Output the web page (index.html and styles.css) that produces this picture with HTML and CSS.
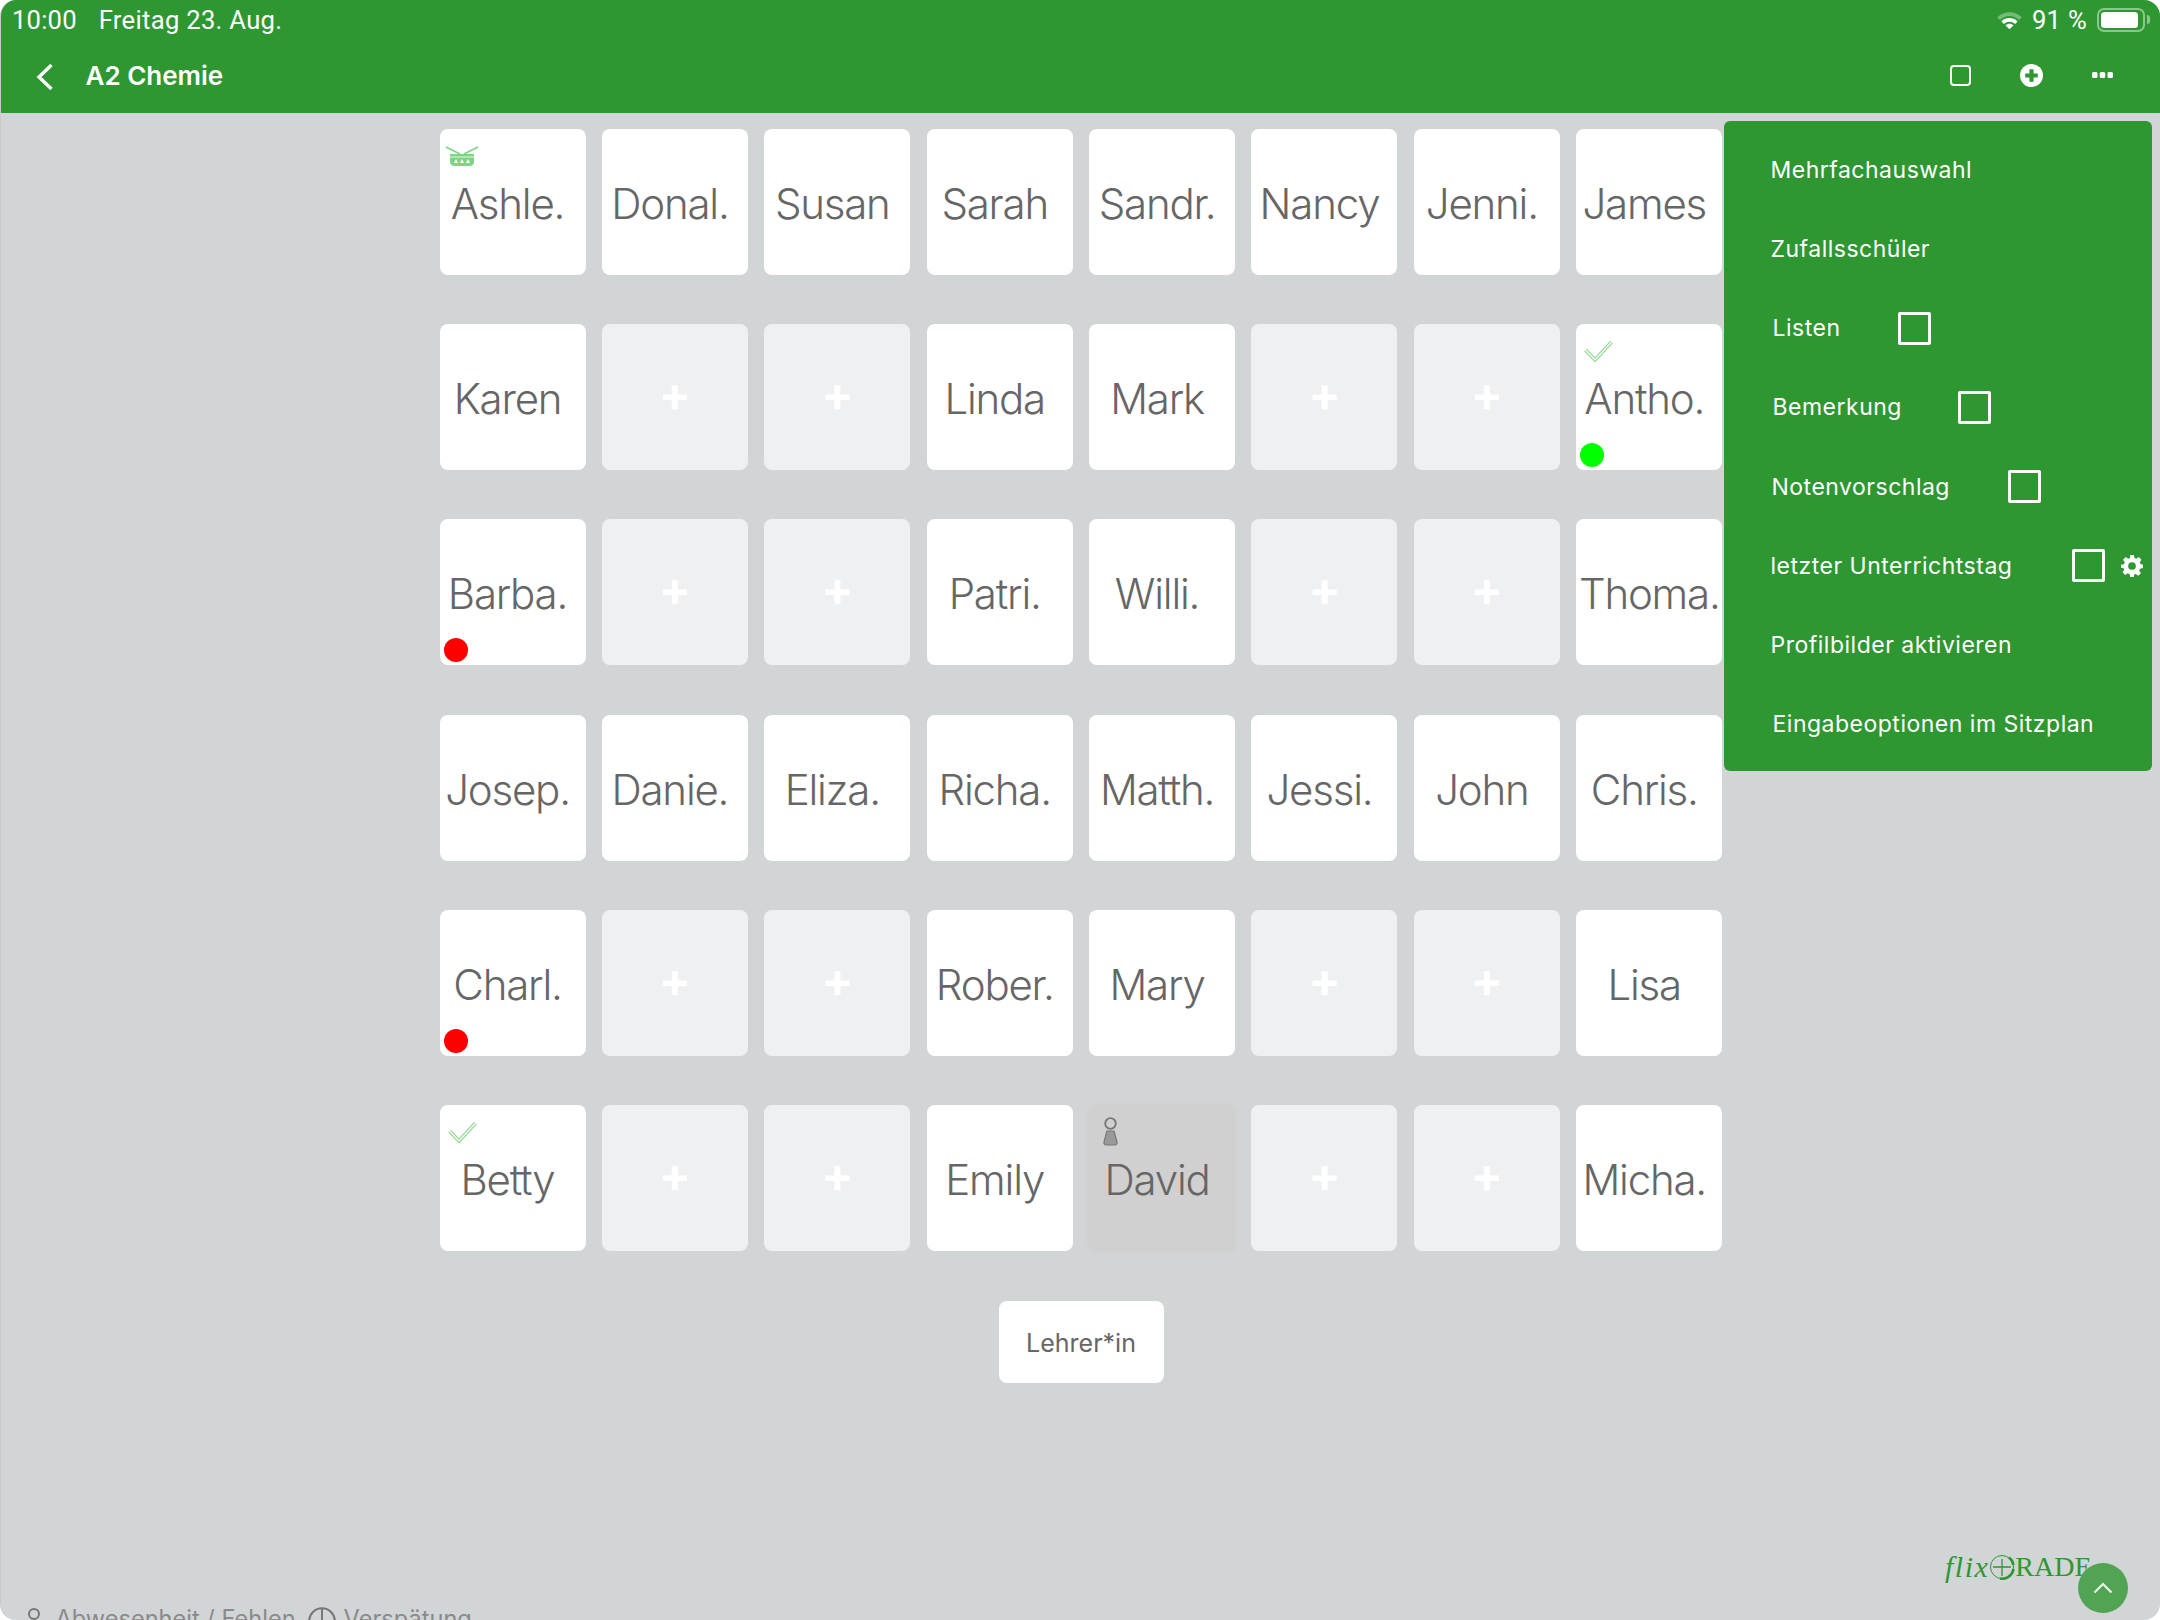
FILE: index.html
```html
<!DOCTYPE html>
<html lang="de">
<head>
<meta charset="utf-8">
<title>A2 Chemie</title>
<link rel="stylesheet" href="styles.css">
</head>
<body>
<div class="app">
  <header class="topbar">
    <div class="status">
      <span class="time">10:00</span>
      <span class="date">Freitag 23. Aug.</span>
      <span class="status-right">
        <svg class="wifi" viewBox="0 0 24 18"><path d="M1 6.500C7.500 .5 16.500 .5 23 6.500L20.600 9C15.500 4.300 8.500 4.300 3.400 9Z" fill="#fff" fill-opacity=".35"/><path d="M4.700 10.300C9 6.300 15 6.300 19.300 10.300L17 12.500C14 9.800 10 9.800 7 12.500Z" fill="#fff"/><path d="M8.300 13.700C10.500 11.800 13.500 11.800 15.700 13.700L12 17.400Z" fill="#fff"/></svg>
        <span class="battery-text">91 %</span>
        <span class="battery"><span class="battery-fill"></span></span>
        <span class="battery-tip"></span>
      </span>
    </div>
    <div class="toolbar">
      <svg class="back" viewBox="0 0 18 28"><path d="M15.500 2L3 14l12.500 12" fill="none" stroke="#fff" stroke-width="3.400"/></svg>
      <span class="title">A2 Chemie</span>
      <span class="tools">
        <span class="tool-square"></span>
        <svg class="tool-plus" viewBox="0 0 22 22"><circle cx="11" cy="11" r="11" fill="#fff"/><path d="M11 5v12M5 11h12" stroke="#2e9732" stroke-width="4"/></svg>
        <svg class="tool-dots" viewBox="0 0 21 6"><rect width="5.500" height="6" rx="1.500" fill="#fff"/><rect x="7.700" width="5.500" height="6" rx="1.500" fill="#fff"/><rect x="15.500" width="5.500" height="6" rx="1.500" fill="#fff"/></svg>
      </span>
    </div>
  </header>

  <main class="content">
    <div class="seats">
      <div class="seat"><svg class="ico-drum" viewBox="0 0 34 20"><path d="M1 1l14 7M33 1L19 8" stroke="#7fd483" stroke-width="1.800" fill="none"/><path d="M5 8h24v8c0 2-2 4-4 4H9c-2 0-4-2-4-4Z" fill="#7fd483"/><path d="M5 11h24" stroke="#fff" stroke-width=".8"/><path d="M9 17l2-4 2 4ZM15 17l2-4 2 4ZM21 17l2-4 2 4Z" fill="#fff"/></svg><span>Ashle.</span></div>
      <div class="seat"><span>Donal.</span></div>
      <div class="seat"><span>Susan</span></div>
      <div class="seat"><span>Sarah</span></div>
      <div class="seat"><span>Sandr.</span></div>
      <div class="seat"><span>Nancy</span></div>
      <div class="seat"><span>Jenni.</span></div>
      <div class="seat"><span>James</span></div>

      <div class="seat"><span>Karen</span></div>
      <div class="seat empty">+</div>
      <div class="seat empty">+</div>
      <div class="seat"><span>Linda</span></div>
      <div class="seat"><span>Mark</span></div>
      <div class="seat empty">+</div>
      <div class="seat empty">+</div>
      <div class="seat"><svg class="ico-check" viewBox="0 0 29 22"><path d="M1.500 10L11 20 27.500 2" fill="none" stroke="#8fd690" stroke-width="3.600"/><path d="M1.500 10L11 20 27.500 2" fill="none" stroke="#fff" stroke-width="1.300"/></svg><span>Antho.</span><i class="dot green"></i></div>

      <div class="seat"><span>Barba.</span><i class="dot red"></i></div>
      <div class="seat empty">+</div>
      <div class="seat empty">+</div>
      <div class="seat"><span>Patri.</span></div>
      <div class="seat"><span>Willi.</span></div>
      <div class="seat empty">+</div>
      <div class="seat empty">+</div>
      <div class="seat wide"><span>Thoma.</span></div>

      <div class="seat"><span>Josep.</span></div>
      <div class="seat"><span>Danie.</span></div>
      <div class="seat"><span>Eliza.</span></div>
      <div class="seat"><span>Richa.</span></div>
      <div class="seat"><span>Matth.</span></div>
      <div class="seat"><span>Jessi.</span></div>
      <div class="seat"><span>John</span></div>
      <div class="seat"><span>Chris.</span></div>

      <div class="seat"><span>Charl.</span><i class="dot red"></i></div>
      <div class="seat empty">+</div>
      <div class="seat empty">+</div>
      <div class="seat"><span>Rober.</span></div>
      <div class="seat"><span>Mary</span></div>
      <div class="seat empty">+</div>
      <div class="seat empty">+</div>
      <div class="seat"><span>Lisa</span></div>

      <div class="seat"><svg class="ico-check" viewBox="0 0 29 22"><path d="M1.500 10L11 20 27.500 2" fill="none" stroke="#8fd690" stroke-width="3.600"/><path d="M1.500 10L11 20 27.500 2" fill="none" stroke="#fff" stroke-width="1.300"/></svg><span>Betty</span></div>
      <div class="seat empty">+</div>
      <div class="seat empty">+</div>
      <div class="seat"><span>Emily</span></div>
      <div class="seat absent"><svg class="ico-person" viewBox="0 0 17 29"><circle cx="8.500" cy="6.500" r="5.300" fill="none" stroke="#777" stroke-width="1.800"/><path d="M5 14h7l3 11c.4 2-.6 3-2 3H4c-1.400 0-2.400-1-2-3Z" fill="#999" stroke="#777" stroke-width="1.200"/></svg><span>David</span></div>
      <div class="seat empty">+</div>
      <div class="seat empty">+</div>
      <div class="seat"><span>Micha.</span></div>
    </div>

    <button class="teacher">Lehrer*in</button>

    <div class="legend">
      <svg class="leg-person" viewBox="0 0 14 28"><circle cx="7" cy="6" r="5" fill="none" stroke="#777" stroke-width="2"/><path d="M4 13h6l3 14H1Z" fill="#8c8c8c"/></svg>
      <span class="leg-text">Abwesenheit / Fehlen</span>
      <svg class="leg-clock" viewBox="0 0 28 28"><circle cx="14" cy="14" r="12.800" fill="none" stroke="#777" stroke-width="2"/><path d="M14 1v13M1 14h26" stroke="#777" stroke-width="2"/></svg>
      <span class="leg-text">Verspätung</span>
    </div>
  </main>

  <nav class="menu">
    <div class="menu-item">Mehrfachauswahl</div>
    <div class="menu-item">Zufallsschüler</div>
    <div class="menu-item inset">Listen<span class="box"></span></div>
    <div class="menu-item inset">Bemerkung<span class="box near"></span></div>
    <div class="menu-item inset-sm">Notenvorschlag<span class="box mid"></span></div>
    <div class="menu-item">letzter Unterrichtstag<span class="box far"></span>
      <svg class="gear" viewBox="0 0 24 24"><path fill="#fff" fill-rule="evenodd" d="M10 0h4l.7 3.300 2 .8L19.500 2.300l2.800 2.800-1.800 2.800.8 2L24 10.700v3.600l-3.300.7-.8 2 1.800 2.800-2.800 2.800-2.800-1.800-2 .8L14 24h-4l-.7-3.300-2-.8-2.800 1.800-2.800-2.800 1.800-2.800-.8-2L0 14.300v-3.600l3.300-.7.800-2L2.300 5.100l2.800-2.800 2.800 1.800 2-.8ZM12 7.800a4.200 4.200 0 1 0 0 8.400 4.200 4.200 0 0 0 0-8.400Z"/></svg>
    </div>
    <div class="menu-item">Profilbilder aktivieren</div>
    <div class="menu-item inset">Eingabeoptionen im Sitzplan</div>
  </nav>

  <div class="logo">
    <span class="logo-flix">flix</span><svg class="logo-mark" viewBox="0 0 26 26"><circle cx="13" cy="13" r="11.500" fill="none" stroke="#2e9732" stroke-width="1"/><path d="M20 3.500A11.500 11.500 0 0 1 24.500 11M24.500 15A11.500 11.500 0 0 1 11 24.500" fill="none" stroke="#2e9732" stroke-width="2.600"/><path d="M13 5v17M4 13h18" stroke="#2e9732" stroke-width="1.300"/></svg><span class="logo-grade">RADE</span>
  </div>
  <button class="to-top" aria-label="nach oben"><svg viewBox="0 0 20 12"><path d="M1.500 10.500L10 2l8.500 8.500" fill="none" stroke="#e6f3e6" stroke-width="2.200"/></svg></button>
</div>
</body>
</html>
```
FILE: styles.css
```css
* { box-sizing: border-box; }
html, body { margin: 0; padding: 0; background: #fff; }
body { width: 2160px; height: 1620px; overflow: hidden; font-family: Inter, "Liberation Sans", sans-serif; }

.app {
  position: relative;
  width: 2160px;
  height: 1620px;
  overflow: hidden;
  background: #d2d5d6;
  border-radius: 16px;
  border-left: 1.500px solid #c9c9d0;
  display: flex;
  flex-direction: column;
}

.topbar { background: #2e9732; color: #fff; height: 113px; flex: none; margin-left: -1.500px; }
.status { display: flex; align-items: center; height: 39px; font-family: Roboto, Inter, sans-serif; font-size: 25.600px; padding-left: 12.500px; }
.time { letter-spacing: .2px; }
.date { margin-left: 22px; letter-spacing: .3px; }
.status-right { margin-left: auto; display: flex; align-items: center; padding-right: 10px; }
.wifi { width: 27px; height: 20px; }
.battery-text { margin-left: 9px; letter-spacing: .3px; }
.battery { margin-left: 10px; width: 48px; height: 24px; border: 2px solid rgba(255,255,255,.45); border-radius: 7px; padding: 2px; display: flex; }
.battery-fill { flex: none; width: 37px; background: #fff; border-radius: 3.500px; }
.battery-tip { width: 3px; height: 9px; margin-left: 2px; background: rgba(255,255,255,.45); border-radius: 0 3px 3px 0; }

.toolbar { display: flex; align-items: center; height: 72px; padding-left: 36px; }
.back { width: 18px; height: 28px; margin-top: 3px; }
.title { margin-left: 32px; font-size: 26px; font-weight: 600; }
.tools { margin-left: auto; display: flex; align-items: center; padding-right: 47px; }
.tool-square { width: 21px; height: 21px; border: 2px solid #fff; border-radius: 4px; }
.tool-plus { width: 23px; height: 23px; margin-left: 49px; }
.tool-dots { width: 21px; height: 6px; margin-left: 49px; }

.content { flex: 1; display: flex; flex-direction: column; padding: 16px 0 0 438.500px; min-height: 0; }
.seats { display: grid; grid-template-columns: repeat(8, 146px); column-gap: 16.400px; row-gap: 49.200px; width: max-content; flex: none; }

.seat {
  position: relative;
  height: 146px;
  width: 146px;
  background: #fff;
  border-radius: 8px;
  display: flex;
  align-items: center;
  justify-content: center;
  padding-right: 10px;
  font-size: 42px;
  font-weight: 300;
  letter-spacing: -1.200px;
  color: #666;
  white-space: nowrap;
}
.seat span { position: relative; top: 1.500px; }
.seat.wide { padding-right: 0; }
.seat.empty { padding: 0 0 7px; background: #eff0f2; color: #fff; font-weight: 700; font-size: 48px; letter-spacing: 0; }
.seat.absent { background: #d0d0d0; box-shadow: 0 0 5px 2px #d0d0d0; }

.dot { position: absolute; left: 4px; bottom: 3px; width: 24px; height: 24px; border-radius: 50%; }
.dot.red { background: #f00; }
.dot.green { background: #0f0; }
.ico-check { position: absolute; left: 8px; top: 16px; width: 29px; height: 22px; }
.ico-drum { position: absolute; left: 5px; top: 17px; width: 34px; height: 20px; }
.ico-person { position: absolute; left: 13px; top: 12px; width: 17px; height: 29px; }

.teacher {
  flex: none;
  align-self: flex-start;
  margin: 50px 0 0 559px;
  width: 165px;
  height: 82px;
  border: 0;
  border-radius: 8px;
  background: #fff;
  color: #666;
  font-family: inherit;
  font-size: 25px;
  font-weight: 400;
  padding: 2px 0 0;
}

.legend { flex: none; display: flex; align-items: flex-start; margin: 225px 0 0 -413px; color: #8a8a8a; font-size: 23.600px; font-weight: 400; height: 40px; }
.leg-person { width: 14px; height: 28px; }
.leg-text { line-height: 28px; margin-top: -3px; }
.leg-person + .leg-text { margin-left: 15px; }
.leg-clock { width: 28px; height: 28px; margin: -1px 8px 0 12px; }

.menu {
  position: absolute;
  left: 1722.500px;
  top: 121px;
  width: 428px;
  height: 650px;
  padding: 9px 0 0;
  background: #2e9732;
  border-radius: 6px;
  color: #fff;
  font-size: 23px;
  font-weight: 400;
  letter-spacing: .5px;
}
.menu-item { display: flex; align-items: center; height: 79.250px; padding-left: 47px; white-space: nowrap; }
.menu-item.inset { padding-left: 49px; }
.menu-item.inset-sm { padding-left: 48px; }
.box { width: 33px; height: 33px; margin-left: 57px; border: 3.500px solid #fff; border-radius: 2px; flex: none; }
.box.near { margin-left: 56px; }
.box.mid { margin-left: 58px; }
.box.far { margin-left: 59.500px; }
.gear { width: 22px; height: 22px; margin-left: 16px; flex: none; }

.logo { position: absolute; left: 1944px; top: 1552px; display: flex; align-items: center; color: #2e9732; font-family: "Liberation Serif", serif; height: 30px; font-size: 30px; }
.logo-flix { font-style: italic; letter-spacing: 1.500px; }
.logo-mark { width: 26px; height: 26px; margin-left: 0; }
.logo-grade { font-size: 28px; margin-left: 0; }

.to-top {
  position: absolute;
  left: 2076.500px;
  top: 1563px;
  width: 50px;
  height: 50px;
  border: 0;
  border-radius: 50%;
  background: #52a455;
  padding: 0;
  display: flex;
  align-items: center;
  justify-content: center;
}
.to-top svg { width: 20px; height: 12px; }
```
